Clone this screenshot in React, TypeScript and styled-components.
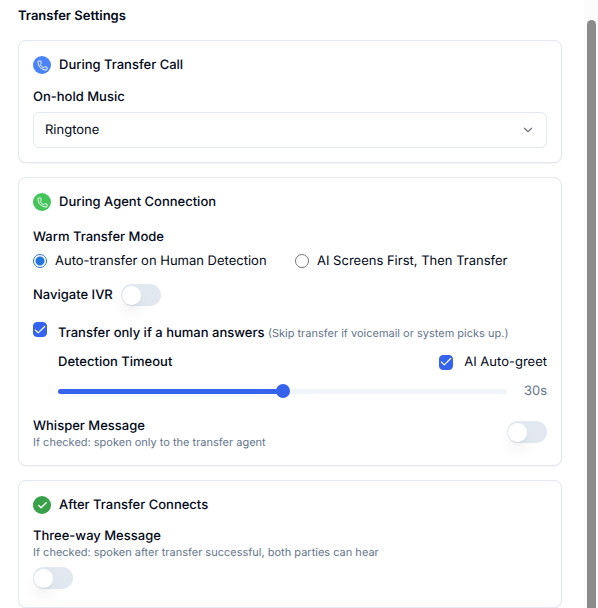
import React, { useState } from "react";
import styled, { createGlobalStyle } from "styled-components";
import { Phone, ChevronDown, Check } from "lucide-react";

const GlobalStyle = createGlobalStyle`
  *, *::before, *::after { box-sizing: border-box; }
  body {
    margin: 0;
    background: #ffffff;
    color: #020817;
    font-family: Inter, "Liberation Sans", sans-serif;
    font-size: 13px;
    line-height: 20px;
    text-rendering: geometricPrecision;
  }
  button, input, select { font: inherit; color: inherit; margin: 0; text-rendering: inherit; }
`;

const Page = styled.div`
  display: grid;
  grid-template-columns: minmax(0, 1fr) 14px;
  min-height: 100vh;
`;

const Content = styled.main`
  padding: 6px 22px 0 18px;
`;

const ScrollRail = styled.div`
  display: flex;
  justify-content: center;
  padding: 20px 2px 0 2px;
  background: #fcfcfc;
`;

const ScrollThumb = styled.div`
  width: 9px;
  border-radius: 5px 5px 0 0;
  background: #8b8b8b;
`;

const PageTitle = styled.h1`
  margin: 0 0 14px;
  font-size: 13px;
  font-weight: 600;
  line-height: 20px;
`;

const CardList = styled.div`
  display: flex;
  flex-direction: column;
  gap: 14px;
`;

const Card = styled.section`
  padding: 14px;
  border: 1px solid #e2e8f0;
  border-radius: 8px;
  background: #ffffff;
  box-shadow: 0 1px 2px rgba(0, 0, 0, 0.05);
`;

const CardHeader = styled.header<{ $gap: number }>`
  display: flex;
  align-items: center;
  gap: 8px;
  margin-bottom: ${(p) => p.$gap}px;
`;

const CardTitle = styled.h2`
  margin: 0;
  font-size: 13px;
  font-weight: 500;
  line-height: 20px;
`;

const IconBadge = styled.span<{ $color: string }>`
  display: flex;
  align-items: center;
  justify-content: center;
  width: 18px;
  height: 18px;
  border-radius: 50%;
  background: ${(p) => p.$color};
  color: #ffffff;
`;

const FieldLabel = styled.label`
  display: block;
  font-weight: 500;
`;

const SelectBox = styled.div`
  display: grid;
  align-items: center;
  margin-top: 5px;

  & > * { grid-area: 1 / 1; }
  & > svg {
    justify-self: end;
    margin-right: 12px;
    color: #71757f;
    pointer-events: none;
  }
`;

const Select = styled.select`
  appearance: none;
  width: 100%;
  height: 36px;
  padding: 0 32px 0 11px;
  border: 1px solid #e2e8f0;
  border-radius: 6px;
  background: #ffffff;
`;

const RadioGroup = styled.fieldset`
  min-width: 0;
  margin: 0 0 13px;
  padding: 0;
  border: 0;
`;

const Legend = styled.legend`
  margin-bottom: 4px;
  padding: 0;
  font-weight: 500;
`;

const RadioRow = styled.div`
  display: grid;
  grid-template-columns: 1fr 1fr;
  column-gap: 10px;
`;

const RadioOption = styled.label`
  display: flex;
  align-items: center;
  gap: 8px;
`;

const Radio = styled.input`
  appearance: none;
  width: 14px;
  height: 14px;
  border: 1px solid #767676;
  border-radius: 50%;
  background: #ffffff;

  &:checked {
    border-color: #2576dc;
    background: radial-gradient(circle, #2576dc 4px, #ffffff 5px);
  }
`;

const InlineRow = styled.div`
  display: flex;
  align-items: center;
  gap: 8px;
  margin-bottom: 16px;
`;

const SwitchButton = styled.button`
  display: flex;
  flex: none;
  width: 40px;
  height: 22px;
  padding: 2px 1px 1px;
  border: 0;
  border-radius: 11px;
  background: #e2e8f0;

  &[aria-checked="true"] {
    justify-content: flex-end;
    background: #3563ed;
  }
`;

const SwitchKnob = styled.span`
  width: 19px;
  height: 19px;
  border-radius: 50%;
  background: #ffffff;
  box-shadow: 0 10px 15px -3px rgba(0, 0, 0, 0.1), 0 4px 6px -4px rgba(0, 0, 0, 0.1);
`;

const HumanOption = styled.div`
  display: grid;
  grid-template-columns: 14px minmax(0, 1fr);
  column-gap: 11px;
`;

const TickBox = styled.span`
  display: grid;
  place-items: center;
  flex: none;
  width: 14px;
  height: 15px;

  & > * { grid-area: 1 / 1; }
  & > svg { color: #ffffff; pointer-events: none; }
`;

const Tick = styled.input`
  appearance: none;
  width: 14px;
  height: 15px;
  border: 1px solid #3563ed;
  border-radius: 4px;

  &:checked { background: #3563ed; }
  &:not(:checked) + svg { visibility: hidden; }
`;

const OptionBody = styled.div`
  display: flex;
  flex-direction: column;
  gap: 9px;
  padding-top: 1px;
`;

const Hint = styled.span`
  color: #64748b;
  font-size: 11px;
  font-weight: 400;
`;

const SplitRow = styled.div`
  display: flex;
  align-items: center;
  justify-content: space-between;
`;

const GreetOption = styled.label`
  display: flex;
  align-items: center;
  gap: 11px;
`;

const SliderRow = styled.div`
  display: grid;
  grid-template-columns: minmax(0, 1fr) 24px;
  align-items: center;
  column-gap: 16px;
`;

const Slider = styled.input`
  appearance: none;
  width: 100%;
  height: 14px;
  background: transparent;

  &::-webkit-slider-runnable-track {
    height: 5px;
    border-radius: 3px;
    background: linear-gradient(to right, #3563ed var(--fill), #f1f5f9 var(--fill));
  }
  &::-webkit-slider-thumb {
    appearance: none;
    width: 14px;
    height: 14px;
    margin-top: -5px;
    border-radius: 50%;
    background: #3563ed;
  }
`;

const SliderValue = styled.output`
  color: #64748b;
  text-align: right;
`;

const MessageRow = styled.div`
  display: flex;
  align-items: center;
  justify-content: space-between;
  margin-top: 15px;
  padding-bottom: 3px;
`;

const MessageHint = styled.p`
  margin: 0;
  color: #64748b;
  font-size: 11px;
  line-height: 12px;
`;

const SwitchLine = styled.div`
  padding: 9px 0 4px;
`;

function Switch({ labelledBy }: { labelledBy: string }) {
  const [on, setOn] = useState(false);
  return (
    <SwitchButton
      type="button"
      role="switch"
      aria-checked={on}
      aria-labelledby={labelledBy}
      onClick={() => setOn(!on)}
    >
      <SwitchKnob />
    </SwitchButton>
  );
}

function Checkbox({ id }: { id: string }) {
  return (
    <TickBox>
      <Tick type="checkbox" id={id} defaultChecked />
      <Check size={14} strokeWidth={2} />
    </TickBox>
  );
}

export default function App() {
  const [timeout, setTimeoutValue] = useState(30);
  return (
    <>
      <GlobalStyle />
      <Page>
        <Content>
          <PageTitle>Transfer Settings</PageTitle>
          <CardList>
            <Card>
              <CardHeader $gap={12}>
                <IconBadge $color="#4a83fa">
                  <Phone size={11} strokeWidth={2} />
                </IconBadge>
                <CardTitle>During Transfer Call</CardTitle>
              </CardHeader>
              <FieldLabel htmlFor="hold-music">On-hold Music</FieldLabel>
              <SelectBox>
                <Select id="hold-music" defaultValue="Ringtone">
                  <option>Ringtone</option>
                </Select>
                <ChevronDown size={14} strokeWidth={2} />
              </SelectBox>
            </Card>

            <Card>
              <CardHeader $gap={15}>
                <IconBadge $color="#43c55a">
                  <Phone size={11} strokeWidth={2} />
                </IconBadge>
                <CardTitle>During Agent Connection</CardTitle>
              </CardHeader>
              <RadioGroup>
                <Legend>Warm Transfer Mode</Legend>
                <RadioRow>
                  <RadioOption>
                    <Radio type="radio" name="mode" defaultChecked />
                    Auto-transfer on Human Detection
                  </RadioOption>
                  <RadioOption>
                    <Radio type="radio" name="mode" />
                    AI Screens First, Then Transfer
                  </RadioOption>
                </RadioRow>
              </RadioGroup>
              <InlineRow>
                <FieldLabel as="span" id="ivr-label">Navigate IVR</FieldLabel>
                <Switch labelledBy="ivr-label" />
              </InlineRow>
              <HumanOption>
                <Checkbox id="human-only" />
                <OptionBody>
                  <FieldLabel htmlFor="human-only">
                    Transfer only if a human answers{" "}
                    <Hint>(Skip transfer if voicemail or system picks up.)</Hint>
                  </FieldLabel>
                  <SplitRow>
                    <FieldLabel htmlFor="timeout">Detection Timeout</FieldLabel>
                    <GreetOption htmlFor="auto-greet">
                      <Checkbox id="auto-greet" />
                      AI Auto-greet
                    </GreetOption>
                  </SplitRow>
                  <SliderRow>
                    <Slider
                      id="timeout"
                      type="range"
                      min={0}
                      max={60}
                      value={timeout}
                      onChange={(e) => setTimeoutValue(Number(e.target.value))}
                      style={{ "--fill": `${(timeout / 60) * 100}%` } as React.CSSProperties}
                    />
                    <SliderValue htmlFor="timeout">{timeout}s</SliderValue>
                  </SliderRow>
                </OptionBody>
              </HumanOption>
              <MessageRow>
                <div>
                  <FieldLabel as="span" id="whisper-label">Whisper Message</FieldLabel>
                  <MessageHint>If checked: spoken only to the transfer agent</MessageHint>
                </div>
                <Switch labelledBy="whisper-label" />
              </MessageRow>
            </Card>

            <Card>
              <CardHeader $gap={11}>
                <IconBadge $color="#38a149">
                  <Check size={11} strokeWidth={3} />
                </IconBadge>
                <CardTitle>After Transfer Connects</CardTitle>
              </CardHeader>
              <FieldLabel as="span" id="threeway-label">Three-way Message</FieldLabel>
              <MessageHint>
                If checked: spoken after transfer successful, both parties can hear
              </MessageHint>
              <SwitchLine>
                <Switch labelledBy="threeway-label" />
              </SwitchLine>
            </Card>
          </CardList>
        </Content>
        <ScrollRail aria-hidden="true">
          <ScrollThumb />
        </ScrollRail>
      </Page>
    </>
  );
}
